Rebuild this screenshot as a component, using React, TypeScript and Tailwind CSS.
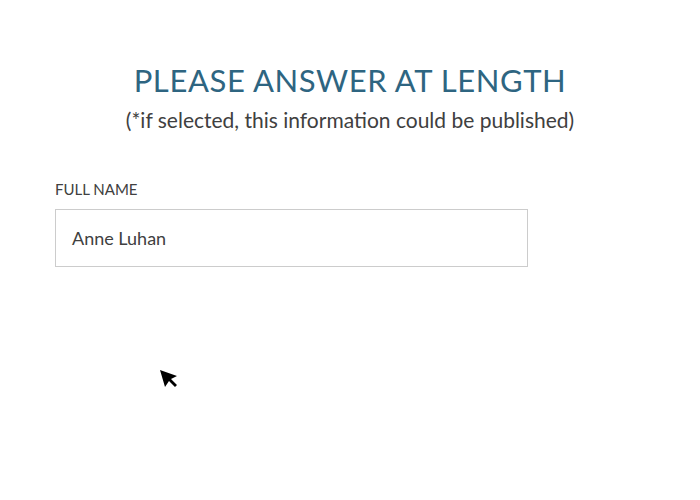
export default function App() {
  return (
    <div className="relative w-[700px] h-[500px] bg-white" style={{ fontFamily: "Lato, 'Noto Sans', sans-serif" }}>
      <div className="flex flex-col items-center pt-[61px]">
        <h1 className="text-[31px] leading-[38px] text-[#2e6581] tracking-[0.6px]">PLEASE ANSWER AT LENGTH</h1>
        <p className="text-[21px] leading-[26px] text-[#404040] mt-[8px]">(*if selected, this information could be published)</p>
      </div>
      <div className="pl-[55px] pt-[47px]">
        <div className="text-[15px] leading-[18px] text-[#404040]">FULL NAME</div>
        <div className="mt-[11px] w-[473px] h-[58px] border border-[#cccccc] flex items-center pl-[16px] text-[18px] text-[#404040]">
          Anne Luhan
        </div>
      </div>
      <svg className="absolute left-[159px] top-[369px]" width="20" height="20" viewBox="0 0 20 20">
        <polygon points="1,1 18,7 12,10 18,16 16,18 10,12 6,18" fill="#000" />
      </svg>
    </div>
  );
}
